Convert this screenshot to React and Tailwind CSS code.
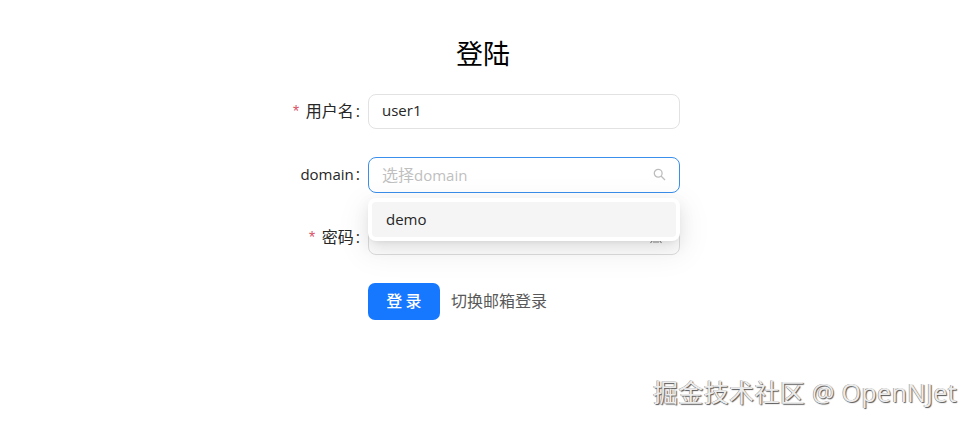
import React from "react";

const font = { fontFamily: '"Open Sans", "Noto Sans CJK SC", sans-serif' };

function Row({ label, required, children, className = "" }) {
  return (
    <div className={`flex items-center ${className}`}>
      <div className="w-[368px] pr-[8px] pb-[2px] flex justify-end items-center text-[16px] text-[#262626] leading-none">
        {required && <span className="text-[#d9566a] mr-[5px] text-[16px] [font-family:'Liberation_Mono',monospace] relative top-[2px]">*</span>}
        <span className={label === "domain" ? "text-[15px]" : ""}>{label}</span>
        <span className="ml-[2px]">:</span>
      </div>
      {children}
    </div>
  );
}

export default function App() {
  return (
    <div className="relative w-[974px] h-[423px] overflow-hidden bg-white" style={font}>
      <h1 className="pt-[36px] pl-[456px] text-[27px] leading-[36px] text-black font-normal">登陆</h1>

      <Row label="用户名" required className="mt-[22px]">
        <div className="w-[312px] h-[35px] rounded-[8px] border border-[#e2e2e2] bg-white flex items-center px-[13px] pb-[2px] text-[15px] text-[#262626]">
          user1
        </div>
      </Row>

      <Row label="domain" className="mt-[28px]">
        <div className="relative w-[312px] h-[36px]">
          <div className="h-full rounded-[8px] border border-[#3a8fec] bg-white flex items-center justify-between pl-[13px] pr-[13px] text-[15px] text-[#bfbfbf]">
            <span><span className="text-[16px]">选择</span>domain</span>
            <svg width="13" height="13" viewBox="0 0 13 13" fill="none" stroke="#bdbdbd" strokeWidth="1.3" className="-mt-[2px]">
              <circle cx="5.2" cy="5.2" r="3.9" />
              <path d="M8 8l4 4" />
            </svg>
          </div>
          <div className="absolute z-10 left-0 top-[41px] w-[312px] h-[43px] rounded-[8px] bg-white px-[4px] pt-[4px] shadow-[0_6px_16px_0_rgba(0,0,0,0.08),0_3px_6px_-4px_rgba(0,0,0,0.12),0_9px_28px_8px_rgba(0,0,0,0.05)]">
            <div className="h-[35px] rounded-[4px] bg-[#f5f5f5] flex items-center px-[14px] text-[15px] text-[#262626]">demo</div>
          </div>
        </div>
      </Row>

      <Row label="密码" required className="mt-[27px]">
        <div className="w-[312px] h-[35px] rounded-[8px] border border-[#dedede] bg-white flex items-center justify-end pr-[16px]">
          <svg width="14" height="14" viewBox="0 0 14 14" fill="none" stroke="#8c8c8c" strokeWidth="1.2">
            <path d="M1.5 12l2-2.5M12.5 12l-2-2.5M4 11h6" />
          </svg>
        </div>
      </Row>

      <div className="mt-[28px] pl-[368px] flex items-center">
        <button className="w-[72px] h-[37px] rounded-[7px] bg-[#1677ff] text-white text-[16px] font-medium tracking-[0.2em] pl-[3px] pb-[2px]">登录</button>
        <span className="ml-[11px] pb-[2px] text-[16px] text-[#595959]">切换邮箱登录</span>
      </div>

      <div className="absolute left-[653px] top-[377px] text-[25px] leading-[30px] whitespace-nowrap text-[#ececec] tracking-[0.35px] [text-shadow:1px_1px_1px_#555,-0.5px_-0.5px_0_#888]">
        掘金技术社区 @ OpenNJet
      </div>
    </div>
  );
}
